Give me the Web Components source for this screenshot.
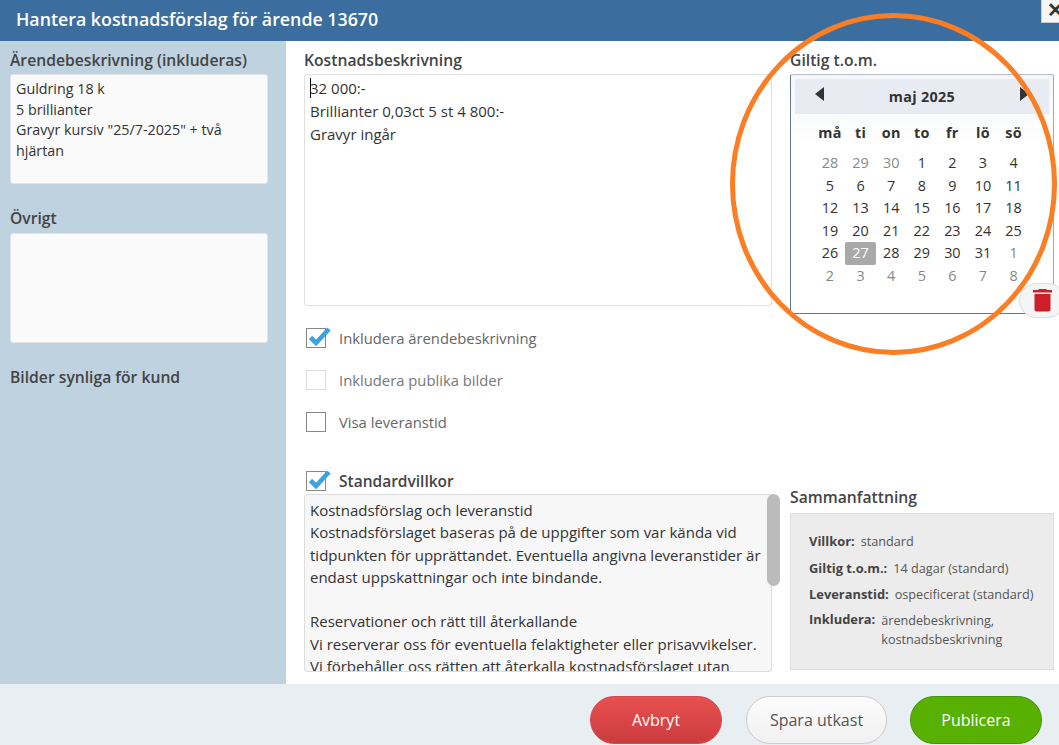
<!DOCTYPE html>
<html lang="sv"><head><meta charset="utf-8"><title>Kostnadsförslag</title>
<style>
html,body{margin:0;padding:0;height:745px;overflow:hidden;background:#fff}
body{font-family:"Open Sans","Noto Sans",sans-serif;color:#333}
</style></head><body>
<cost-dialog></cost-dialog>
<script>
function def(name, html, init){
  customElements.define(name, class extends HTMLElement{
    constructor(){super();this.attachShadow({mode:'open'}).innerHTML=html;}
    connectedCallback(){ if(init) init(this); }
  });
}
def('note-box',`<style>
:host{display:block;box-sizing:border-box;background:#fafafa;border:1px solid #e2e4e6;border-radius:3px;padding:4px 5px;font-size:14.3px;line-height:20.7px;color:#333;height:110px;width:258px;margin-left:10px;white-space:pre-wrap}
</style><slot></slot>`);
def('side-panel',`<style>
:host{display:block;width:286px;flex:none;background:#bfd2e0;box-sizing:border-box;padding-top:9px}
h3{font:600 15.7px/20px "Open Sans",sans-serif;color:#444;margin:0 0 4px 10px}
note-box{margin-bottom:24px}
h3.o{margin-bottom:5px}
h3.b{margin-top:24px}
</style>
<h3>Ärendebeskrivning (inkluderas)</h3>
<note-box>Guldring 18 k
5 brillianter
Gravyr kursiv "25/7-2025" + två hjärtan</note-box>
<h3 class="o">Övrigt</h3>
<note-box></note-box>
<h3 class="b">Bilder synliga för kund</h3>`);
def('check-row',`<style>
:host{display:flex;align-items:center;height:22px;gap:13px;font-size:14.8px;color:#666;position:relative}
:host([strong]){font-weight:600;color:#444;font-size:15.5px}
.box{width:20px;height:20px;border:1px solid #888;box-sizing:border-box;margin-left:2px;flex:none;position:relative;background:#fff}
:host([disabled]) .box{border-color:#ddd}
:host([disabled]){color:#777}
svg{position:absolute;left:1px;top:-4px;display:none}
:host([checked]) svg{display:block}
</style>
<span class="box"><svg width="24" height="22" viewBox="0 0 24 22"><path d="M2.5 12.5 L8 18 L21 4" fill="none" stroke="#3aa3e3" stroke-width="4.6"/></svg></span><slot></slot>`);
def('month-cal',`<style>
:host{display:block;box-sizing:border-box;width:264px;height:240px;background:linear-gradient(#f5f6f9,#fff 30%);border:1px solid #5f7890;border-top-color:#b4bcc8;border-right-color:#a0aab6;border-radius:2px 2px 0 0;padding:4px;font-size:14.4px;color:#333}
.head{height:35px;background:#e8ecf2;display:flex;align-items:center;justify-content:center;font-weight:700;font-size:14.4px;letter-spacing:.3px;color:#333;position:relative}
.t{position:absolute;top:8px;width:0;height:0;border-top:7px solid transparent;border-bottom:7px solid transparent}
.l{left:20px;border-right:9px solid #333}.r{right:20px;border-left:9px solid #333}
.g{display:grid;grid-template-columns:repeat(7,30.6px);grid-template-rows:30px;margin:8px 0 0 19.7px;grid-auto-rows:22.6px;text-align:center;line-height:22.6px}
.g b{font-weight:700;font-size:14.4px;color:#333;letter-spacing:.2px}
.g span.m{color:#888}
.g span.s{background:#a9a9a9;color:#fff;border-radius:2px}
</style><div class="head"><i class="t l"></i>maj 2025<i class="t r"></i></div><div class="g" id="g"></div>`,
el=>{
  const g=el.shadowRoot.getElementById('g'); if(g.children.length) return;
  let h='';['må','ti','on','to','fr','lö','sö'].forEach(d=>h+=`<b>${d}</b>`);
  [28,29,30].forEach(d=>h+=`<span class="m">${d}</span>`);
  for(let d=1;d<=31;d++)h+=`<span${d==27?' class="s"':''}>${d}</span>`;
  [1,2,3,4,5,6,7,8].forEach(d=>h+=`<span class="m">${d}</span>`);
  g.innerHTML=h;
});
def('trash-button',`<style>
:host{position:absolute;right:-11px;top:233px;width:46px;height:35px;border:1px solid #ddd;border-radius:18px;background:#f5f5f5;display:flex;align-items:center;padding-left:13px;box-sizing:border-box;z-index:2}
svg{display:block}
</style><svg width="19" height="23" viewBox="0 0 19 23"><path d="M6 0h7l1 1h5v2.500H0V1h5z" fill="#cc1f2a"/><path d="M1.500 5h16v15.500a2 2 0 0 1-2 2h-12a2 2 0 0 1-2-2z" fill="#cc1f2a"/></svg>`);
def('terms-box',`<style>
:host{display:block;position:relative;box-sizing:border-box;width:468px;height:178px;background:#f7f7f7;border:1px solid #ddd;border-radius:3px;overflow:hidden;padding:4px 5px;font-size:15px;line-height:22.3px;color:#333;white-space:pre-wrap}
</style><slot></slot>`);
def('summary-box',`<style>
:host{display:flex;flex-direction:column;box-sizing:border-box;width:264px;height:157px;background:#ececec;border:1px solid #dedede;padding:18px 8px 10px 18px;font-size:12.65px;color:#444;row-gap:8.500px;line-height:18px}
.r{display:flex;gap:6px;margin:0}
dt{font-weight:700;font-size:12.9px;flex:none}dd{margin:0;color:#555}
dl{display:contents}
.last{margin-top:-2px}
.last dd{margin-top:1px;width:130px;line-height:19px}
</style><dl><div class="r"><dt>Villkor:</dt><dd>standard</dd></div><div class="r"><dt>Giltig t.o.m.:</dt><dd>14 dagar (standard)</dd></div><div class="r"><dt>Leveranstid:</dt><dd>ospecificerat (standard)</dd></div><div class="r last"><dt>Inkludera:</dt><dd>ärendebeskrivning, kostnadsbeskrivning</dd></div></dl>`);
def('pill-button',`<style>
:host{display:flex;align-items:center;justify-content:center;box-sizing:border-box;height:48px;border-radius:24px;font-size:16px;border:1px solid #ccc;background:#f6f6f6;color:#555}
:host([kind=red]){background:linear-gradient(#e85050,#cb3c3e);border-color:#d84a4c;color:#fff;width:132px;margin-right:1px}
:host([kind=plain]){background:linear-gradient(#fcfcfc,#f1f1f1);width:141px}
:host([kind=green]){background:#58b000;border-color:#3f9510;color:#fff;width:132px}
</style><slot></slot>`);
def('cost-dialog',`<style>
:host{display:flex;flex-direction:column;width:1059px;height:745px;position:relative;overflow:hidden}
header{height:41px;flex:none;background:#3b6d9e;color:#fff;font:600 17.8px/38px "Open Sans",sans-serif;padding-left:16px;box-sizing:border-box}
.close{position:absolute;top:-1px;left:1041px;width:22px;height:24px;background:#f6f6f6;border:1px solid #ccc;box-sizing:border-box;font:700 20px/20px "Liberation Sans",sans-serif;color:#333;padding-left:5px;overflow:hidden}
.body{flex:1;display:flex;min-height:0}
main{flex:1;display:grid;grid-template-columns:468px 264px;column-gap:18px;grid-template-rows:auto 1fr;padding:9px 0 0 18px;box-sizing:border-box;align-content:start}
h3{font:600 15.7px/20px "Open Sans",sans-serif;color:#444;margin:0 0 4px}
.ta{box-sizing:border-box;height:232px;border:1px solid #e0e0e0;border-radius:3px;padding:2px 5px;font-size:15px;line-height:22.800px;color:#333;white-space:pre-wrap}
.caret{border-left:1px solid #000;margin-right:-1px}
.checks{display:flex;flex-direction:column;gap:20px;margin-top:21px}
.cal{position:relative}
.low-l{margin-top:36px}
.low-l check-row{margin-bottom:2px;height:23px}
.low-r{margin-top:54px}
.low-r h3{margin-bottom:6px}
.thumb{position:absolute;left:767px;top:494px;width:13px;height:92px;background:#bbb;border-radius:7px}
footer{height:61px;flex:none;background:#e8eef2;display:flex;justify-content:flex-end;gap:23px;padding:12px 17px 0 0;box-sizing:border-box;align-items:flex-start}
svg.ring{position:absolute;left:726px;top:10px;pointer-events:none;z-index:1}
</style>
<header>Hantera kostnadsförslag för ärende 13670</header>
<div class="close">✕</div>
<div class="body">
<side-panel></side-panel>
<main>
<section>
<h3>Kostnadsbeskrivning</h3>
<div class="ta"><span class="caret"></span>32 000:-
Brillianter 0,03ct 5 st 4 800:-
Gravyr ingår</div>
<div class="checks">
<check-row checked>Inkludera ärendebeskrivning</check-row>
<check-row disabled>Inkludera publika bilder</check-row>
<check-row>Visa leveranstid</check-row>
</div>
</section>
<section class="cal">
<h3>Giltig t.o.m.</h3>
<month-cal></month-cal>
<trash-button></trash-button>
</section>
<section class="low-l">
<check-row checked strong>Standardvillkor</check-row>
<terms-box>Kostnadsförslag och leveranstid
Kostnadsförslaget baseras på de uppgifter som var kända vid tidpunkten för upprättandet. Eventuella angivna leveranstider är endast uppskattningar och inte bindande.

Reservationer och rätt till återkallande
Vi reserverar oss för eventuella felaktigheter eller prisavvikelser.
Vi förbehåller oss rätten att återkalla kostnadsförslaget utan föregående meddelande.</terms-box>
</section>
<section class="low-r">
<h3>Sammanfattning</h3>
<summary-box></summary-box>
</section>
</main>
</div>
<footer>
<pill-button kind="red">Avbryt</pill-button>
<pill-button kind="plain">Spara utkast</pill-button>
<pill-button kind="green">Publicera</pill-button>
</footer>
<div class="thumb"></div>
<svg class="ring" width="336" height="350" viewBox="0 0 336 350"><ellipse cx="167.500" cy="174" rx="161" ry="168.500" fill="none" stroke="#fb7d24" stroke-width="5"/></svg>`);
</script>
</body></html>
